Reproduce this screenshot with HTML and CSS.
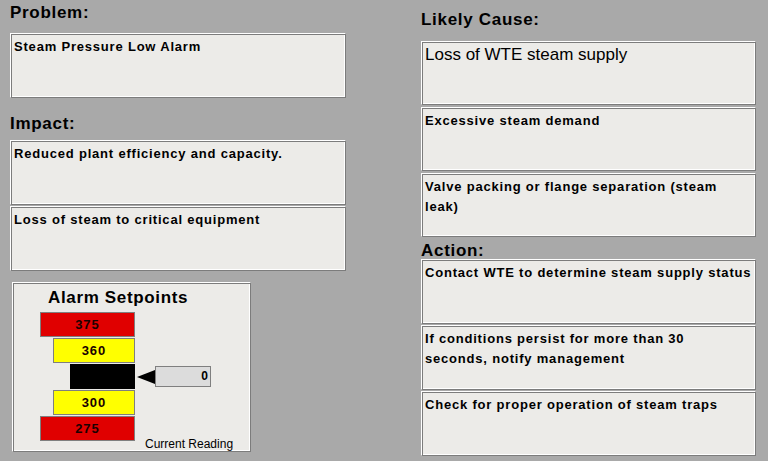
FILE: index.html
```html
<!DOCTYPE html>
<html>
<head>
<meta charset="utf-8">
<link rel="stylesheet" href="styles.css">
</head>
<body>
<div class="screen">
  <div class="col col-left">
    <h2 class="head head-problem">Problem:</h2>
    <div class="box">Steam Pressure Low Alarm</div>
    <h2 class="head head-impact">Impact:</h2>
    <div class="stack">
      <div class="box">Reduced plant efficiency and capacity.</div>
      <div class="box">Loss of steam to critical equipment</div>
    </div>
    <div class="panel">
      <div class="panel-title">Alarm Setpoints</div>
      <div class="bars">
        <div class="row"><div class="slot"><div class="bar red w-hi">375</div></div></div>
        <div class="row"><div class="slot"><div class="bar yellow w-mid">360</div></div></div>
        <div class="row">
          <div class="slot"><div class="bar black w-lo"></div></div>
          <div class="pointer"></div>
          <div class="reading">0</div>
        </div>
        <div class="row"><div class="slot"><div class="bar yellow w-mid">300</div></div></div>
        <div class="row row-last">
          <div class="slot"><div class="bar red w-hi">275</div></div>
          <div class="caption">Current Reading</div>
        </div>
      </div>
    </div>
  </div>
  <div class="col col-right">
    <h2 class="head head-cause">Likely Cause:</h2>
    <div class="stack stack-wide">
      <div class="box box-large">Loss of WTE steam supply</div>
      <div class="box">Excessive steam demand</div>
      <div class="box">Valve packing or flange separation (steam<br>leak)</div>
    </div>
    <h2 class="head head-action">Action:</h2>
    <div class="stack">
      <div class="box">Contact WTE to determine steam supply status</div>
      <div class="box">If conditions persist for more than 30<br>seconds, notify management</div>
      <div class="box">Check for proper operation of steam traps</div>
    </div>
  </div>
</div>
</body>
</html>
```

FILE: styles.css
```css
* { box-sizing: border-box; }
html, body {
  margin: 0;
  padding: 0;
  background: #a9a9a9;
  width: 768px;
  height: 461px;
  overflow: hidden;
  font-family: "Liberation Sans", Arial, sans-serif;
  color: #000;
}
.screen {
  display: flex;
  align-items: flex-start;
}
.col {
  display: flex;
  flex-direction: column;
}
.col-left { margin-left: 10px; width: 336px; }
.col-right { margin-left: 75px; width: 335px; }

.head {
  margin: 0;
  font-size: 17px;
  font-weight: bold;
  letter-spacing: 0.7px;
  line-height: 20px;
  height: 20px;
}
.head-problem { margin-top: 3px; margin-bottom: 10px; }
.head-impact { margin-top: 16px; margin-bottom: 6px; }
.head-cause { margin-top: 10px; margin-bottom: 11px; }
.head-action { margin-top: 6px; height: 16px; line-height: 16px; }

.stack {
  display: flex;
  flex-direction: column;
  gap: 1px;
}
.stack-wide { gap: 2px; }
.stack-wide .box { height: 64px; }

.box {
  height: 65px;
  background: #ecebe8;
  border: 1px solid;
  border-color: #ffffff #7c7c7c #7c7c7c #ffffff;
  box-shadow: inset 1px 1px 0 #7c7c7c, inset -1px -1px 0 #ffffff;
  padding: 3px 3px;
  font-size: 13px;
  font-weight: bold;
  letter-spacing: 0.8px;
  line-height: 20px;
  white-space: nowrap;
  overflow: hidden;
}
.box-large {
  font-size: 17px;
  font-weight: normal;
  letter-spacing: 0;
}

.panel {
  margin-top: 11px;
  margin-left: 2px;
  width: 239px;
  height: 170px;
  background: #ecebe8;
  border: 1px solid;
  border-color: #ffffff #7c7c7c #7c7c7c #ffffff;
  box-shadow: inset 1px 1px 0 #7c7c7c, inset -1px -1px 0 #ffffff;
  padding: 5px 0 0 1px;
}
.panel-title {
  margin-left: 34px;
  font-size: 17px;
  font-weight: bold;
  letter-spacing: 0.65px;
  line-height: 20px;
  height: 20px;
}
.bars {
  margin-top: 4px;
  margin-left: 26px;
  display: flex;
  flex-direction: column;
  gap: 1px;
}
.row {
  display: flex;
  align-items: center;
  height: 25px;
}
.row-last { align-items: flex-end; }
.slot {
  width: 95px;
  display: flex;
  justify-content: flex-end;
}
.bar {
  height: 25px;
  border: 1px solid #7f7f7f;
  font-size: 13px;
  font-weight: bold;
  letter-spacing: 1px;
  line-height: 23px;
  text-align: center;
  color: #1a0000;
}
.w-hi { width: 95px; }
.w-mid { width: 82px; }
.w-lo { width: 65px; }
.red { background: #e00000; }
.yellow { background: #ffff00; }
.black { background: #000000; border-color: #000; }
.pointer {
  margin-left: 2px;
  width: 0;
  height: 0;
  border-top: 7px solid transparent;
  border-bottom: 7px solid transparent;
  border-right: 18px solid #000;
}
.reading {
  width: 56px;
  height: 21px;
  background: #dcdcdc;
  border: 1px solid #7f7f7f;
  font-size: 12px;
  font-weight: bold;
  line-height: 19px;
  text-align: right;
  padding-right: 2px;
}
.caption {
  margin-left: 10px;
  margin-bottom: -10px;
  font-size: 12px;
  line-height: 14px;
  white-space: nowrap;
}
```
